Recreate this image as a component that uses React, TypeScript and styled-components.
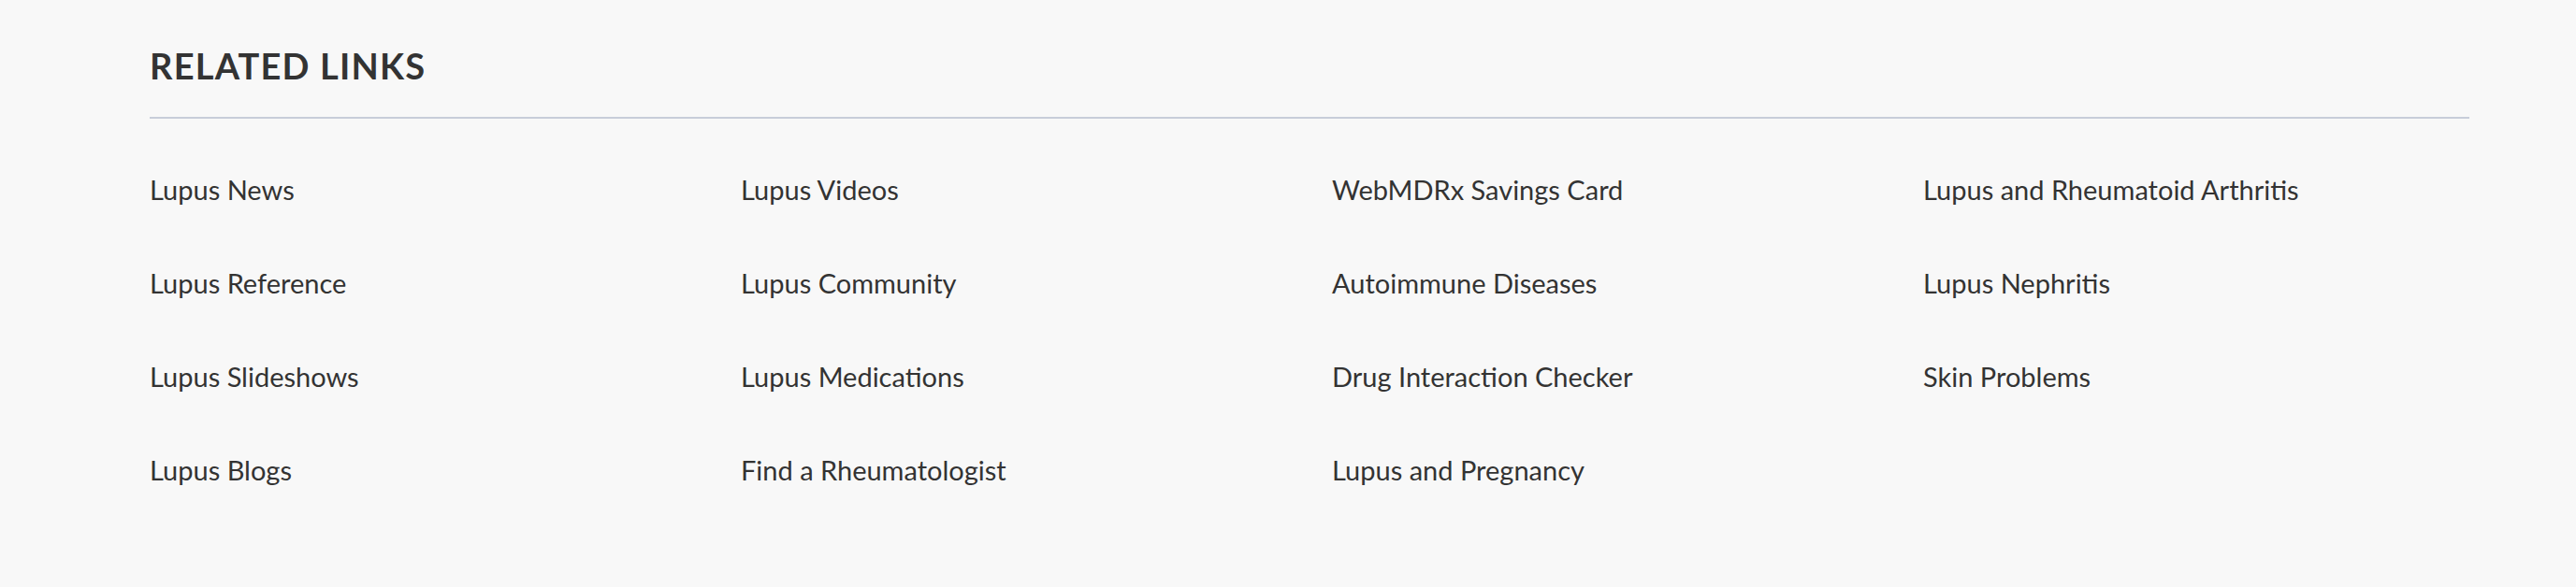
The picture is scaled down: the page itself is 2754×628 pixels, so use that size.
import { FC } from "react";
import styled, { createGlobalStyle } from "styled-components";

const GlobalStyle = createGlobalStyle`
  html, body {
    margin: 0;
    padding: 0;
    background: #f8f8f8;
  }
  body {
    font-family: Lato, "Noto Sans", sans-serif;
    color: #333333;
  }
`;

const Section = styled.section`
  box-sizing: border-box;
  width: 2754px;
  min-height: 628px;
  padding: 46px 114px 0 160px;
  background: #f8f8f8;
`;

const Heading = styled.h2`
  margin: 0;
  padding-bottom: 31px;
  font-size: 38px;
  line-height: 48px;
  font-weight: 700;
  letter-spacing: 1.2px;
  text-transform: uppercase;
  color: #333333;
  border-bottom: 2px solid #c8cdd9;
`;

const LinkGrid = styled.ul`
  list-style: none;
  margin: 0;
  padding: 56px 0 0;
  display: grid;
  grid-template-columns: repeat(4, 584px);
  grid-auto-flow: column;
  grid-template-rows: repeat(4, 40px);
  column-gap: 48px;
  row-gap: 60px;
`;

const Item = styled.li`
  margin: 0;
`;

const Link = styled.a`
  font-size: 29px;
  line-height: 40px;
  color: #333333;
  text-decoration: none;
  white-space: nowrap;
  &:hover {
    text-decoration: underline;
  }
`;

const links = [
  "Lupus News",
  "Lupus Reference",
  "Lupus Slideshows",
  "Lupus Blogs",
  "Lupus Videos",
  "Lupus Community",
  "Lupus Medications",
  "Find a Rheumatologist",
  "WebMDRx Savings Card",
  "Autoimmune Diseases",
  "Drug Interaction Checker",
  "Lupus and Pregnancy",
  "Lupus and Rheumatoid Arthritis",
  "Lupus Nephritis",
  "Skin Problems",
];

const App: FC = () => {
  return (
    <>
      <GlobalStyle />
      <Section>
        <Heading>Related Links</Heading>
        <LinkGrid>
          {links.map((label) => (
            <Item key={label}>
              <Link href="#">{label}</Link>
            </Item>
          ))}
        </LinkGrid>
      </Section>
    </>
  );
};

export default App;
